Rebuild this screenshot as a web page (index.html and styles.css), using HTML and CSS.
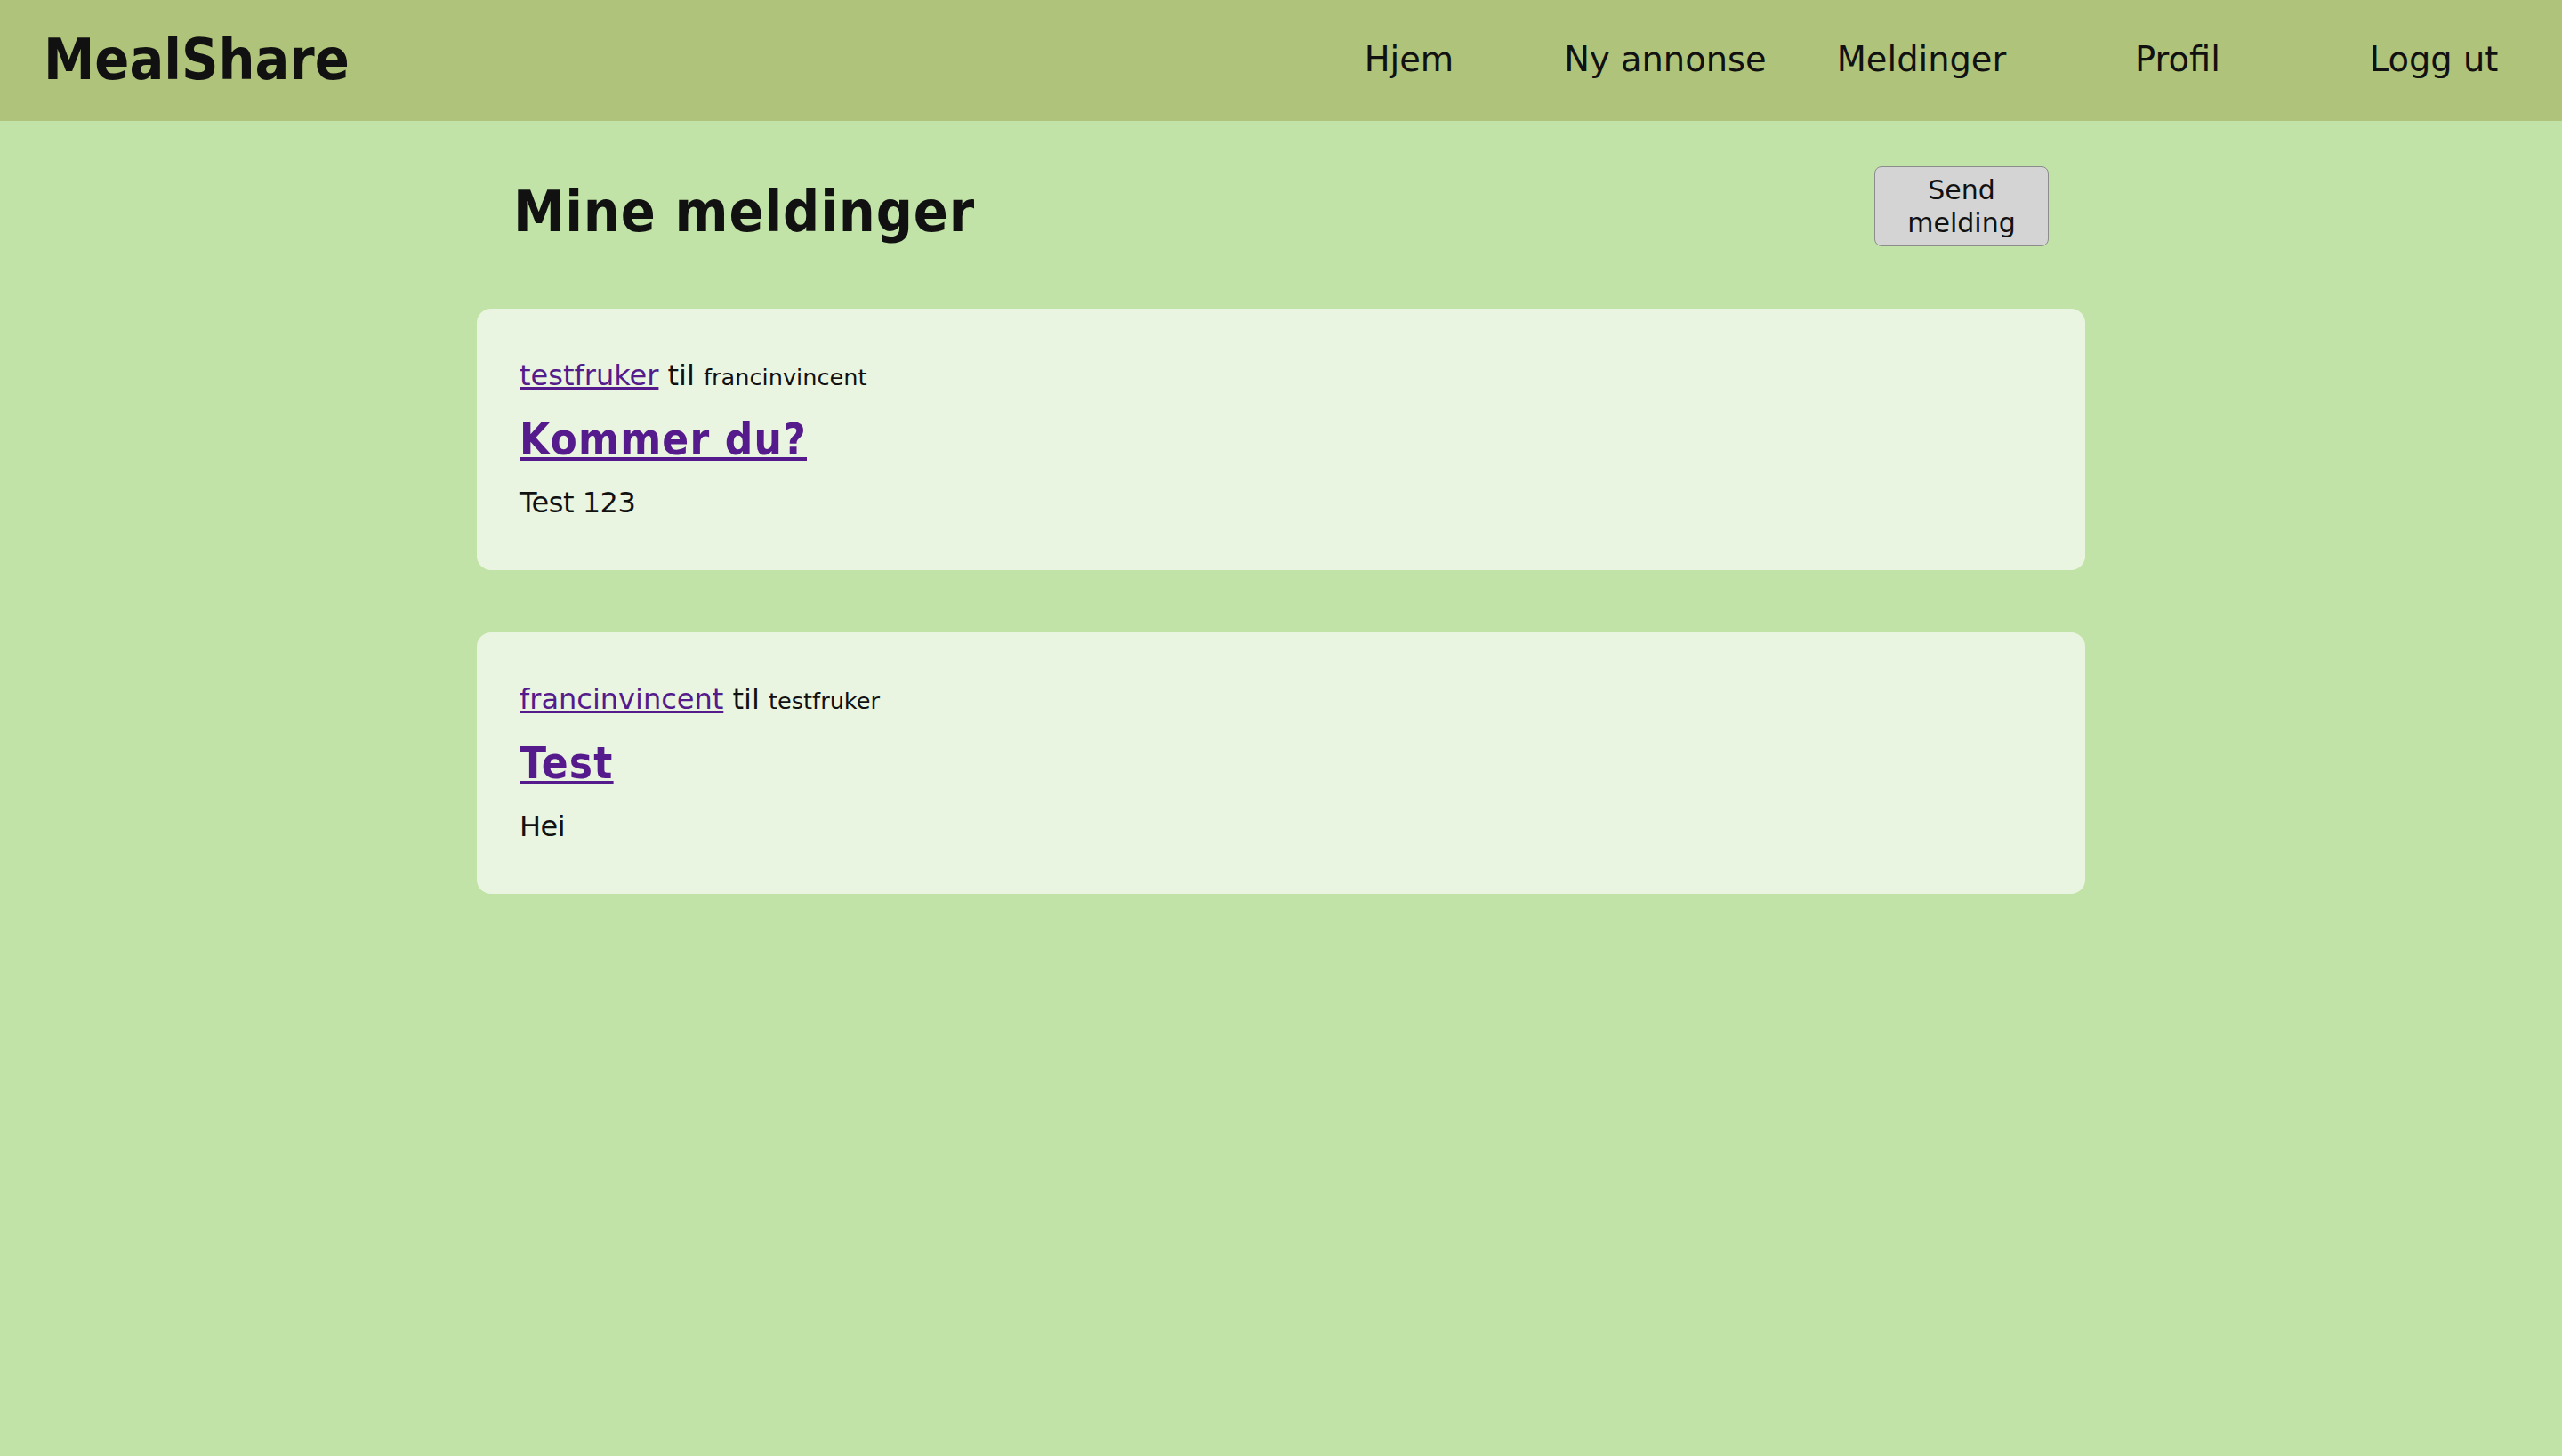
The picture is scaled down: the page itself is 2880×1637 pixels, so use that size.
FILE: index.html
```html
<!DOCTYPE html>
<html lang="no">
<head>
<meta charset="utf-8">
<title>MealShare</title>
<link rel="stylesheet" href="styles.css">
</head>
<body>
<header class="topbar">
  <div class="logo">MealShare</div>
  <nav class="nav">
    <a class="nav-item" href="#">Hjem</a>
    <a class="nav-item" href="#">Ny annonse</a>
    <a class="nav-item" href="#">Meldinger</a>
    <a class="nav-item" href="#">Profil</a>
    <a class="nav-item" href="#">Logg ut</a>
  </nav>
</header>
<main class="content">
  <div class="title-row">
    <h1 class="page-title">Mine meldinger</h1>
    <button class="send-btn" type="button">Send melding</button>
  </div>
  <article class="card">
    <div class="meta"><a class="user-link" href="#">testfruker</a> til <span class="recipient">francinvincent</span></div>
    <h2 class="msg-title"><a href="#">Kommer du?</a></h2>
    <p class="msg-body">Test 123</p>
  </article>
  <article class="card">
    <div class="meta"><a class="user-link" href="#">francinvincent</a> til <span class="recipient">testfruker</span></div>
    <h2 class="msg-title"><a href="#">Test</a></h2>
    <p class="msg-body">Hei</p>
  </article>
</main>
</body>
</html>
```
FILE: styles.css
```css
html, body {
  margin: 0;
  padding: 0;
}
body {
  background: #c2e3a7;
  color: #111111;
  font-family: "DejaVu Sans", "Liberation Sans", sans-serif;
  font-size: 32px;
  min-height: 1637px;
}
.topbar {
  box-sizing: border-box;
  height: 136px;
  padding-bottom: 3px;
  background: #afc47a;
  display: flex;
  align-items: center;
  justify-content: space-between;
}
.logo {
  padding-left: 49px;
  font-family: "DejaVu Sans Condensed", "DejaVu Sans", sans-serif;
  font-weight: bold;
  font-size: 64px;
  color: #111111;
}
.nav {
  display: flex;
  width: 1440px;
}
.nav-item {
  width: 288px;
  text-align: center;
  font-size: 38.4px;
  color: #111111;
  text-decoration: none;
}
.content {
  width: 1808px;
  margin: 0 auto;
  padding-top: 51px;
  display: flex;
  flex-direction: column;
  gap: 70px;
}
.title-row {
  display: flex;
  justify-content: space-between;
  align-items: center;
  padding: 0 41px;
}
.page-title {
  margin: 12px 0 0 0;
  font-family: "DejaVu Sans Condensed", "DejaVu Sans", sans-serif;
  font-weight: bold;
  font-size: 64px;
  letter-spacing: 0.9px;
}
.send-btn {
  width: 196px;
  padding: 7px 10px;
  background: #d4d4d4;
  border: 1px solid #8c8c8c;
  border-radius: 8px;
  font-family: "DejaVu Sans", sans-serif;
  font-size: 30px;
  line-height: 37px;
  color: #111111;
}
.card {
  background: #eaf5e1;
  border-radius: 16px;
  padding: 55px 48px 56px;
}
.meta {
  line-height: 40px;
  font-size: 32px;
}
.user-link {
  color: #551a8b;
}
.recipient {
  font-size: 25.6px;
}
.msg-title {
  margin: 21px 0 0 0;
  font-family: "DejaVu Sans Condensed", "DejaVu Sans", sans-serif;
  font-weight: bold;
  font-size: 49px;
  line-height: 60px;
  letter-spacing: 1.2px;
}
.msg-title a {
  color: #551a8b;
}
.msg-body {
  margin: 20px 0 0 0;
  line-height: 40px;
  letter-spacing: -0.5px;
}
```
